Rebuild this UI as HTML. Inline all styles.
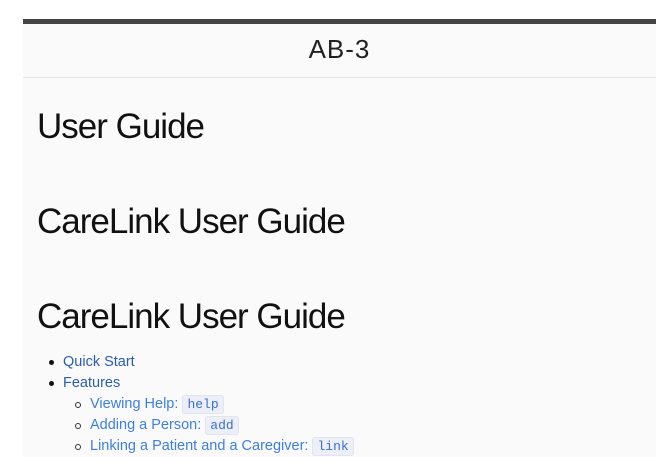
<!DOCTYPE html>
<html><head><meta charset="utf-8"><style>
body{margin:0;width:672px;height:457px;background:#fff;overflow:hidden;font-family:"Liberation Sans",sans-serif;position:relative}
.bar{position:absolute;left:23px;top:19px;width:633px;height:5px;background:#444}
.page{position:absolute;left:23px;top:24px;width:633px;height:433px;background:#fafafa}
.hdr{position:absolute;left:0;top:0;width:633px;height:53px;border-bottom:1px solid #e6e6e6;text-align:center;font-size:26px;line-height:50px;color:#222;letter-spacing:1px}
h1{position:absolute;left:14px;margin:0;font-weight:normal;font-size:35px;color:#111;letter-spacing:-1px;line-height:40px;white-space:nowrap}
.li{position:absolute;font-size:14.5px;line-height:20px;color:#2a5db0;white-space:nowrap}
.li.s{color:#3d7fe0}
.b{position:absolute;width:5px;height:5px;border-radius:50%;background:#111}
.c{position:absolute;width:4px;height:4px;border-radius:50%;border:1px solid #333}
code{font-family:"Liberation Mono",monospace;font-size:13px;background:#eceef8;border:1px solid #e2e4f0;border-radius:3px;padding:1px 4px;color:#3a6fd0}
</style></head><body>
<div class="bar"></div>
<div class="page">
<div class="hdr">AB-3</div>
<h1 style="top:83px">User Guide</h1>
<h1 style="top:178px">CareLink User Guide</h1>
<h1 style="top:273px">CareLink User Guide</h1>
<div class="b" style="left:26px;top:336px"></div><div class="li" style="left:40px;top:328px">Quick Start</div>
<div class="b" style="left:26px;top:357px"></div><div class="li" style="left:40px;top:349px">Features</div>
<div class="c" style="left:52px;top:378px"></div><div class="li s" style="left:67px;top:370px">Viewing Help: <code>help</code></div>
<div class="c" style="left:52px;top:399px"></div><div class="li s" style="left:67px;top:391px">Adding a Person: <code>add</code></div>
<div class="c" style="left:52px;top:420px"></div><div class="li s" style="left:67px;top:412px">Linking a Patient and a Caregiver: <code>link</code></div>
</div>
</body></html>
